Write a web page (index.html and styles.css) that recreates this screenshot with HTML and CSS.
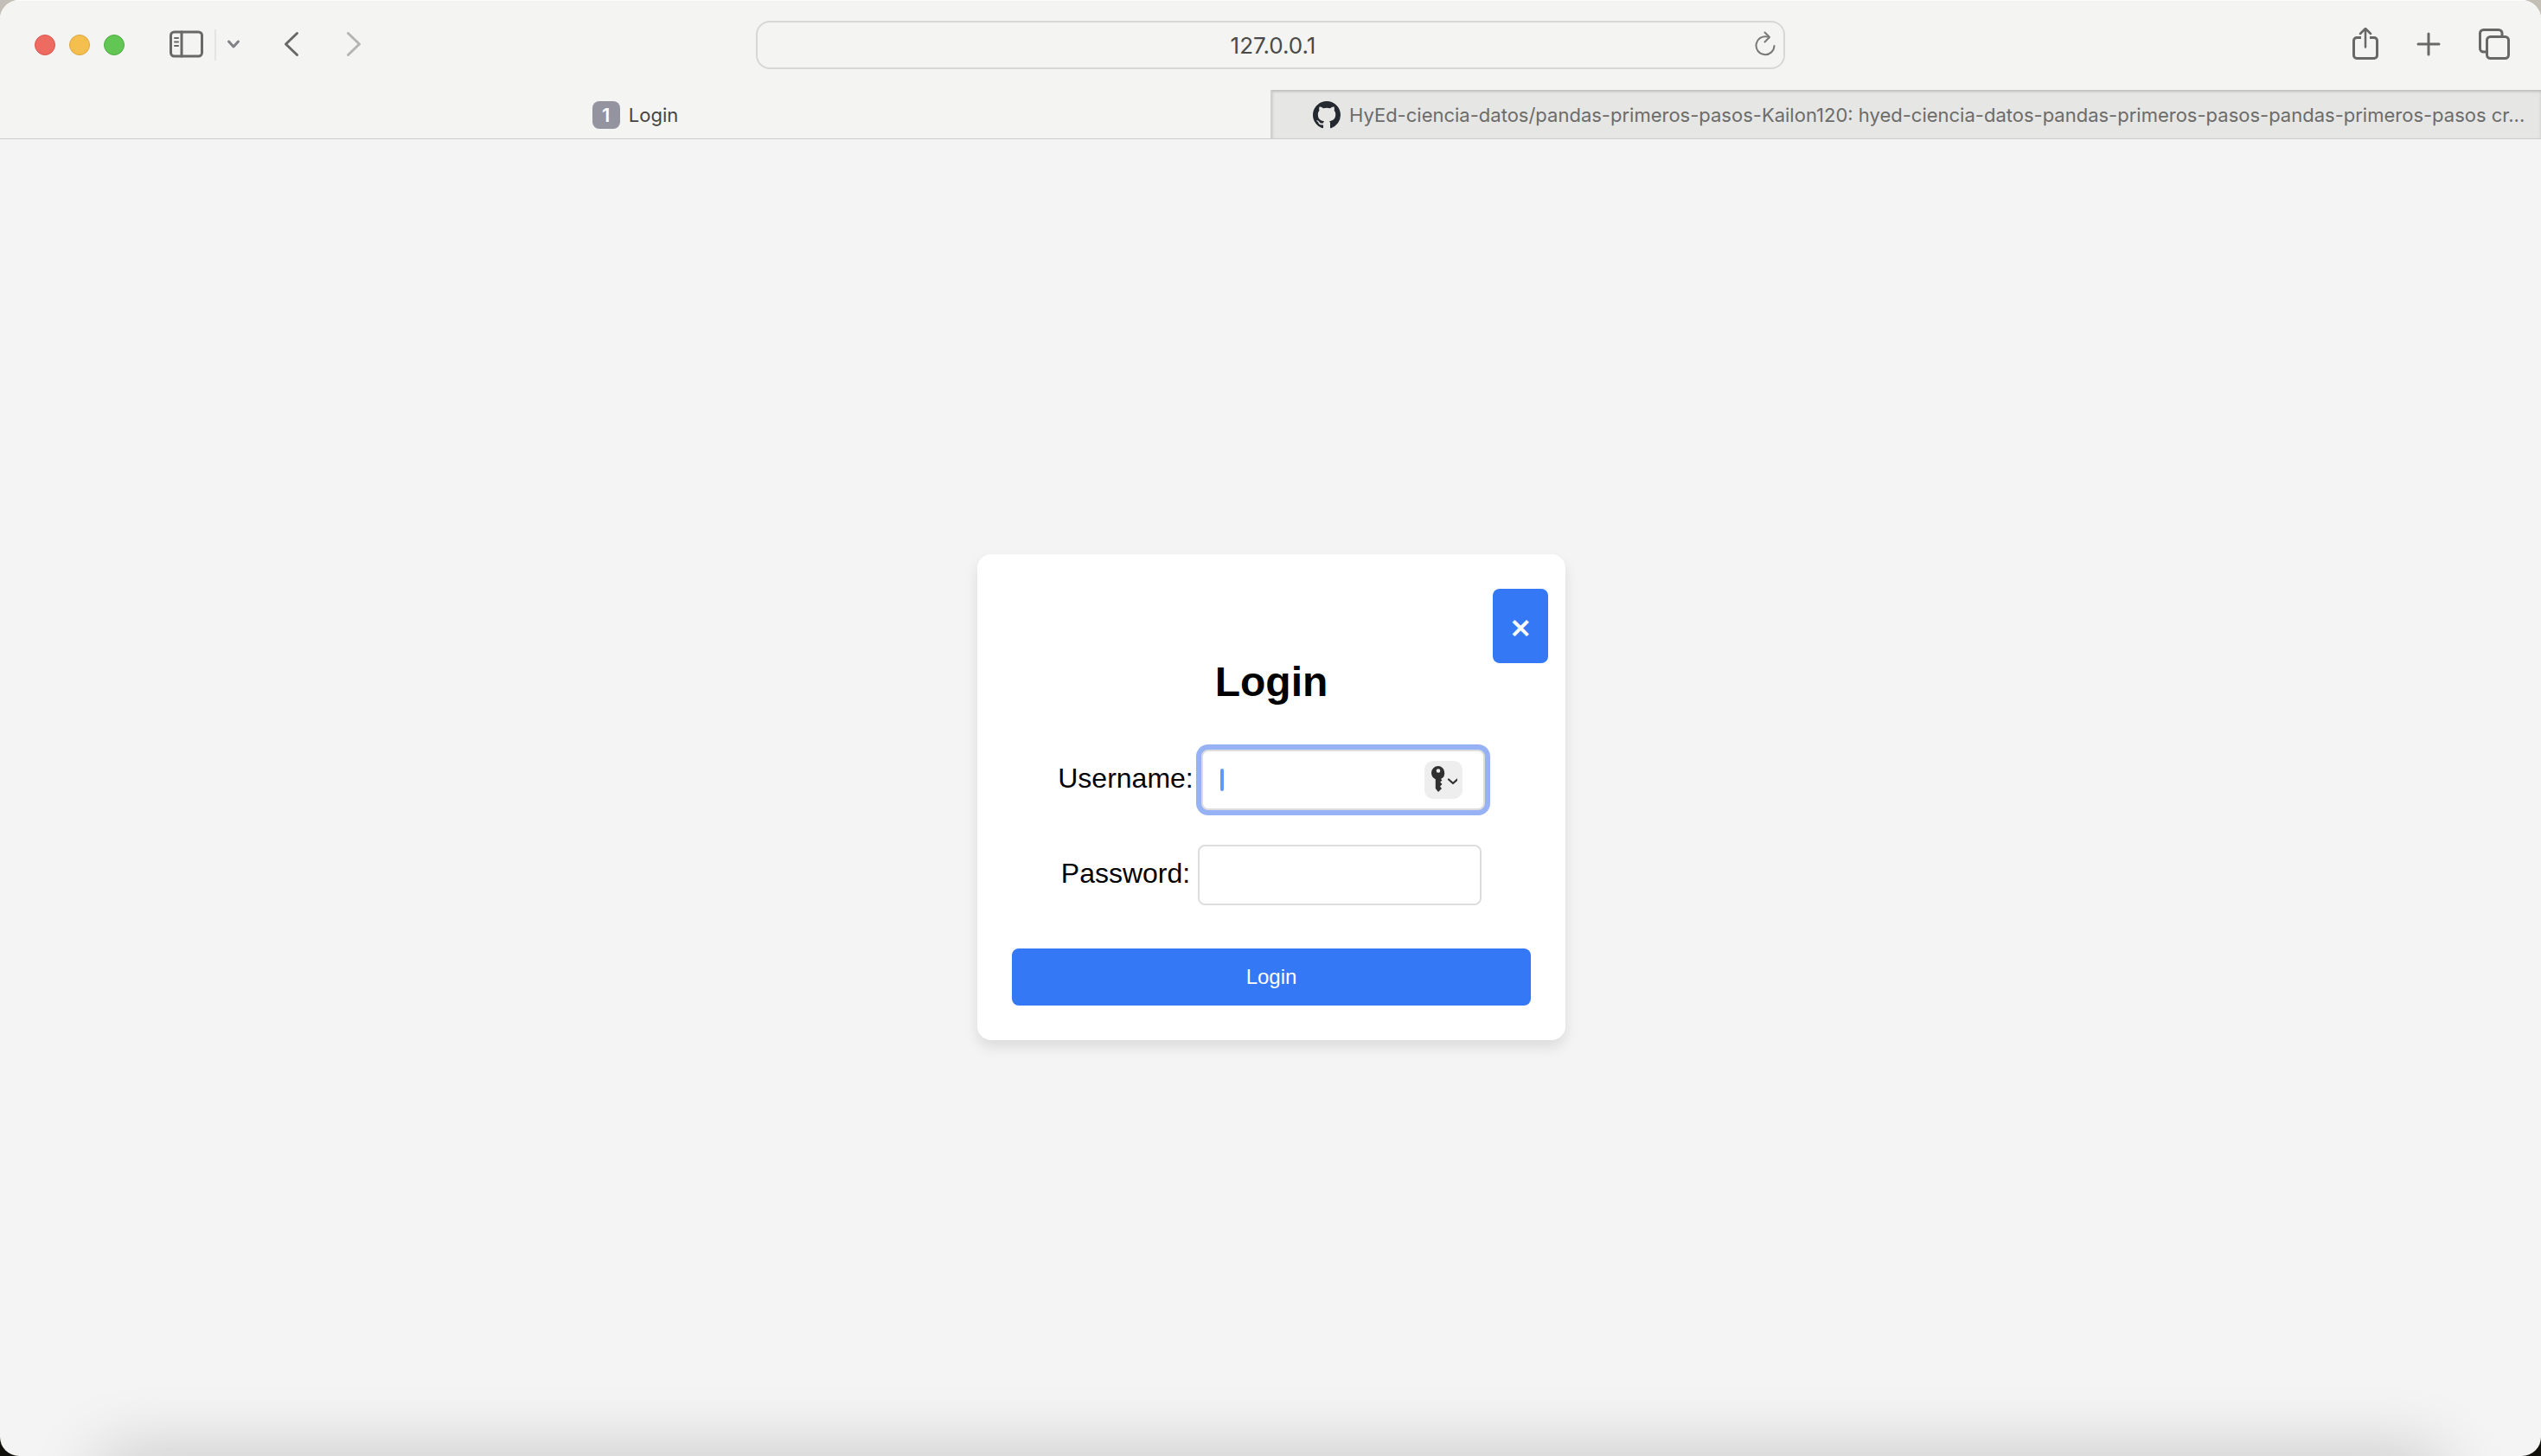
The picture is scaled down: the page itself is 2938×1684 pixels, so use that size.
FILE: index.html
```html
<!DOCTYPE html>
<html lang="en">
<head>
<meta charset="utf-8">
<title>Login</title>
<link rel="stylesheet" href="styles.css">
</head>
<body>
<div class="window">
  <header class="toolbar">
    <div class="toolbar-left">
      <div class="lights">
        <button class="light light-close" aria-label="Close window"></button>
        <button class="light light-min" aria-label="Minimize window"></button>
        <button class="light light-max" aria-label="Zoom window"></button>
      </div>
      <button class="tool tool-sidebar" aria-label="Show sidebar">
        <svg width="40" height="32" viewBox="0 0 40 32" fill="none" stroke="#686866" stroke-width="3" stroke-linecap="round"><rect x="1.5" y="2" width="36" height="28" rx="4"/><path d="M14 2v28"/><path d="M6 9h4M6 13.500h4M6 18h4" stroke-width="2"/></svg>
      </button>
      <button class="tool tool-menu" aria-label="Tab groups">
        <svg width="16" height="12" viewBox="0 0 16 12" fill="none" stroke="#808085" stroke-width="3" stroke-linecap="round" stroke-linejoin="round"><path d="M2.500 3l5.500 6 5.500-6"/></svg>
      </button>
      <button class="tool tool-back" aria-label="Back">
        <svg width="18" height="30" viewBox="0 0 18 30" fill="none" stroke="#686866" stroke-width="3" stroke-linecap="round" stroke-linejoin="round"><path d="M15.500 2.500L2.500 15l13 12.500"/></svg>
      </button>
      <button class="tool tool-forward" aria-label="Forward">
        <svg width="18" height="30" viewBox="0 0 18 30" fill="none" stroke="#b4b4b2" stroke-width="3" stroke-linecap="round" stroke-linejoin="round"><path d="M2.500 2.500l13 12.500-13 12.500"/></svg>
      </button>
    </div>
    <div class="address">
      <input class="address-input" type="text" value="127.0.0.1" aria-label="Address">
      <button class="tool tool-reload" aria-label="Reload">
        <svg width="26" height="30" viewBox="0 0 26 30" fill="none" stroke="#787876" stroke-width="2" stroke-linecap="round" stroke-linejoin="round"><path d="M16 6.600A10.500 10.500 0 1 0 23.500 17"/><path d="M12.500 1.500l5.500 5.500-5.500 5.500"/></svg>
      </button>
    </div>
    <div class="toolbar-right">
      <button class="tool" aria-label="Share">
        <svg width="30" height="38" viewBox="0 2 30 38" fill="none" stroke="#686866" stroke-width="3" stroke-linecap="round" stroke-linejoin="round"><path d="M10 13.500H5A3.500 3.500 0 0 0 1.500 17v17A3.500 3.500 0 0 0 5 37.500h20a3.500 3.500 0 0 0 3.500-3.500V17a3.500 3.500 0 0 0-3.500-3.500h-5" stroke-linecap="butt"/><path d="M15 24.500V3.500M9 9l6-6 6 6" stroke-width="2.500"/></svg>
      </button>
      <button class="tool" aria-label="New tab">
        <svg width="28" height="28" viewBox="0 0 28 28" fill="none" stroke="#686866" stroke-width="3" stroke-linecap="round"><path d="M14 2v24M2 14h24"/></svg>
      </button>
      <button class="tool" aria-label="Tab overview">
        <svg width="36" height="36" viewBox="0 0 36 36" fill="none" stroke="#686866" stroke-width="3"><rect x="9.500" y="9.500" width="25" height="25" rx="4"/><path d="M9 27H5.500a4 4 0 0 1-4-4V5.500a4 4 0 0 1 4-4H23a4 4 0 0 1 4 4V9"/></svg>
      </button>
    </div>
  </header>
  <nav class="tabs" aria-label="Tabs">
    <a class="tab tab-active" href="#login"><span class="tab-badge">1</span><span class="tab-title">Login</span></a>
    <a class="tab tab-other" href="#github">
      <svg class="tab-icon" width="32" height="32" viewBox="0 0 16 16" fill="#24292f"><path d="M8 0C3.580 0 0 3.580 0 8c0 3.540 2.290 6.530 5.470 7.590.4.070.55-.17.55-.38 0-.19-.01-.82-.01-1.490-2.010.37-2.530-.49-2.690-.94-.09-.23-.48-.94-.82-1.130-.28-.15-.68-.52-.01-.53.63-.01 1.080.58 1.230.82.72 1.210 1.870.87 2.330.66.07-.52.28-.87.51-1.070-1.780-.2-3.640-.89-3.640-3.950 0-.87.31-1.590.82-2.150-.08-.2-.36-1.020.08-2.120 0 0 .67-.21 2.200.82.64-.18 1.320-.27 2-.27s1.360.09 2 .27c1.530-1.040 2.200-.82 2.200-.82.44 1.100.16 1.920.08 2.120.51.56.82 1.270.82 2.150 0 3.070-1.870 3.750-3.650 3.950.29.25.54.73.54 1.480 0 1.070-.01 1.930-.01 2.200 0 .21.15.46.55.38A8.010 8.010 0 0 0 16 8c0-4.420-3.580-8-8-8z"/></svg>
      <span class="tab-title">HyEd-ciencia-datos/pandas-primeros-pasos-Kailon120: hyed-ciencia-datos-pandas-primeros-pasos-pandas-primeros-pasos cr...</span>
    </a>
  </nav>
  <main class="page">
    <form class="card" id="login">
      <button class="button close" type="button" aria-label="Close">×</button>
      <h1 class="heading">Login</h1>
      <div class="fields">
        <div class="field">
          <label class="label" for="username">Username:</label>
          <div class="input-wrap">
            <input class="input input-focused" id="username" type="text">
            <span class="caret"></span>
            <button class="autofill" type="button" aria-label="Fill saved password">
              <svg width="32" height="32" viewBox="0 0 32 32"><path fill="#303030" fill-rule="evenodd" d="M10 0a8 8 0 0 0-8 8c0 3.300 2 6 4.800 7.200V26L10 30l4-4-2-2.500 2.500-2.500-2.300-2.500 2.300-2-1.500-1.500A8 8 0 0 0 10 0zm0 3.200a2.300 2.300 0 1 1 0 4.600 2.300 2.300 0 0 1 0-4.600z"/><path d="M22 15.500l5 4.500 5-4.500" fill="none" stroke="#303030" stroke-width="2.200" stroke-linecap="round" stroke-linejoin="round"/></svg>
            </button>
          </div>
        </div>
        <div class="field">
          <label class="label" for="password">Password:</label>
          <input class="input" id="password" type="password">
        </div>
      </div>
      <button class="button submit" type="submit">Login</button>
    </form>
  </main>
  <div class="dock-shadow"></div>
</div>
</body>
</html>
```
FILE: styles.css
```css
* {
  box-sizing: border-box;
}

body {
  margin: 0;
  background: linear-gradient(#c4bfb6 50%, #12100a 50%);
  font-family: "Liberation Sans", Arial, sans-serif;
}

button,
input {
  margin: 0;
  padding: 0;
  border: 0;
  background: none;
  font: inherit;
  color: inherit;
}

.window {
  position: relative;
  display: flex;
  flex-direction: column;
  min-height: 100vh;
  overflow: hidden;
  border-radius: 22px;
  background: #f4f4f4;
}

/* Browser toolbar */
.toolbar {
  display: grid;
  grid-template-columns: 1fr 40.5% 1fr;
  align-items: center;
  height: 104px;
  background: #f4f4f2;
  box-shadow: inset 0 1px #fcfcfb;
  font-family: Inter, sans-serif;
}

.toolbar-left,
.toolbar-right,
.lights {
  display: flex;
  align-items: center;
}

.toolbar-left {
  padding-left: 40px;
}

.lights {
  gap: 16px;
}

.light {
  width: 24px;
  height: 24px;
  border: 1px solid;
  border-radius: 50%;
}

.light-close {
  background: #ed6b60;
  border-color: #d9574d;
}

.light-min {
  background: #f5bf4f;
  border-color: #dba640;
}

.light-max {
  background: #62c655;
  border-color: #52ab45;
}

.tool {
  display: flex;
  padding-bottom: 2px;
}

.tool-sidebar {
  margin-left: 52px;
}

.tool-menu {
  align-items: center;
  height: 36px;
  margin-left: 12px;
  padding-left: 12px;
  border-left: 2px solid #e4e4e2;
}

.tool-back {
  margin-left: 50px;
}

.tool-forward {
  margin-left: 54px;
}

.toolbar-right {
  justify-content: flex-end;
  gap: 44px;
  padding-right: 36px;
}

.address {
  display: flex;
  align-items: center;
  height: 56px;
  padding: 0 8px 0 40px;
  border: 2px solid #d7d7d5;
  border-radius: 16px;
}

.address-input {
  flex: 1;
  min-width: 0;
  color: #4a4a49;
  font-size: 26px;
  text-align: center;
  outline: 0;
}

/* Tab strip */
.tabs {
  display: grid;
  grid-template-columns: 1fr 1fr;
  height: 57px;
  border-bottom: 1px solid #cdcdcb;
  background: #f4f4f2;
  font-family: Inter, sans-serif;
  font-size: 22px;
}

.tab {
  display: flex;
  align-items: center;
  justify-content: center;
  min-width: 0;
  padding-top: 1px;
  gap: 10px;
  color: #444443;
  text-decoration: none;
}

.tab-other {
  justify-content: flex-start;
  padding-left: 47px;
  border-left: 2px solid #d0d0ce;
  background: #e6e6e4;
  box-shadow: inset 0 2px 3px #bcbcba;
  color: #6c6c6a;
}

.tab-badge {
  width: 32px;
  border-radius: 8px;
  background: #9494a0;
  color: #ffffff;
  font-weight: 600;
  line-height: 32px;
  text-align: center;
}

.tab-icon {
  flex: none;
}

.tab-title {
  overflow: hidden;
  white-space: nowrap;
}

/* Login page */
.page {
  display: flex;
  flex: 1;
  align-items: center;
  justify-content: center;
  padding: 0 0 2px 2px;
}

.card {
  display: flex;
  flex-direction: column;
  width: 680px;
  padding: 40px;
  border-radius: 16px;
  background: #ffffff;
  box-shadow: 0 8px 16px rgba(0, 0, 0, 0.1);
}

.button {
  padding: 20px 0;
  border-radius: 8px;
  background: #3578f6;
  color: #ffffff;
}

.close {
  align-self: flex-end;
  width: 64px;
  margin-right: -20px;
  font-family: Inter, sans-serif;
  font-size: 40px;
  font-weight: 500;
  line-height: 46px;
}

.heading {
  margin: 0 0 56px;
  font-size: 48px;
  line-height: 44px;
  text-align: center;
}

.fields {
  display: flex;
  flex-direction: column;
  gap: 40px;
  margin-bottom: 50px;
}

.field {
  display: flex;
  align-items: center;
  justify-content: center;
  gap: 9px;
  font-size: 32px;
}

.label {
  padding-bottom: 2px;
}

.input-wrap {
  position: relative;
  display: flex;
}

.input {
  width: 328px;
  height: 70px;
  padding: 0 20px;
  border: 2px solid #dddddd;
  border-radius: 8px;
  background: #ffffff;
  font-size: 24px;
  outline: 0;
}

.input-focused {
  box-shadow: 0 0 0 6px #96b2f5;
  caret-color: transparent;
}

.caret {
  position: absolute;
  top: 22px;
  left: 22px;
  width: 4px;
  height: 26px;
  border-radius: 2px;
  background: #6497f8;
}

.autofill {
  position: absolute;
  top: 13px;
  right: 26px;
  display: flex;
  padding: 6px;
  border-radius: 10px;
  background: #eeeeee;
}

.submit {
  font-size: 24px;
  line-height: 26px;
}

/* Soft shadow cast along the lower edge */
.dock-shadow {
  position: absolute;
  right: 110px;
  bottom: -60px;
  left: 110px;
  height: 60px;
  border-radius: 40px;
  box-shadow: 0 0 80px rgba(0, 0, 0, 0.22);
}
```
